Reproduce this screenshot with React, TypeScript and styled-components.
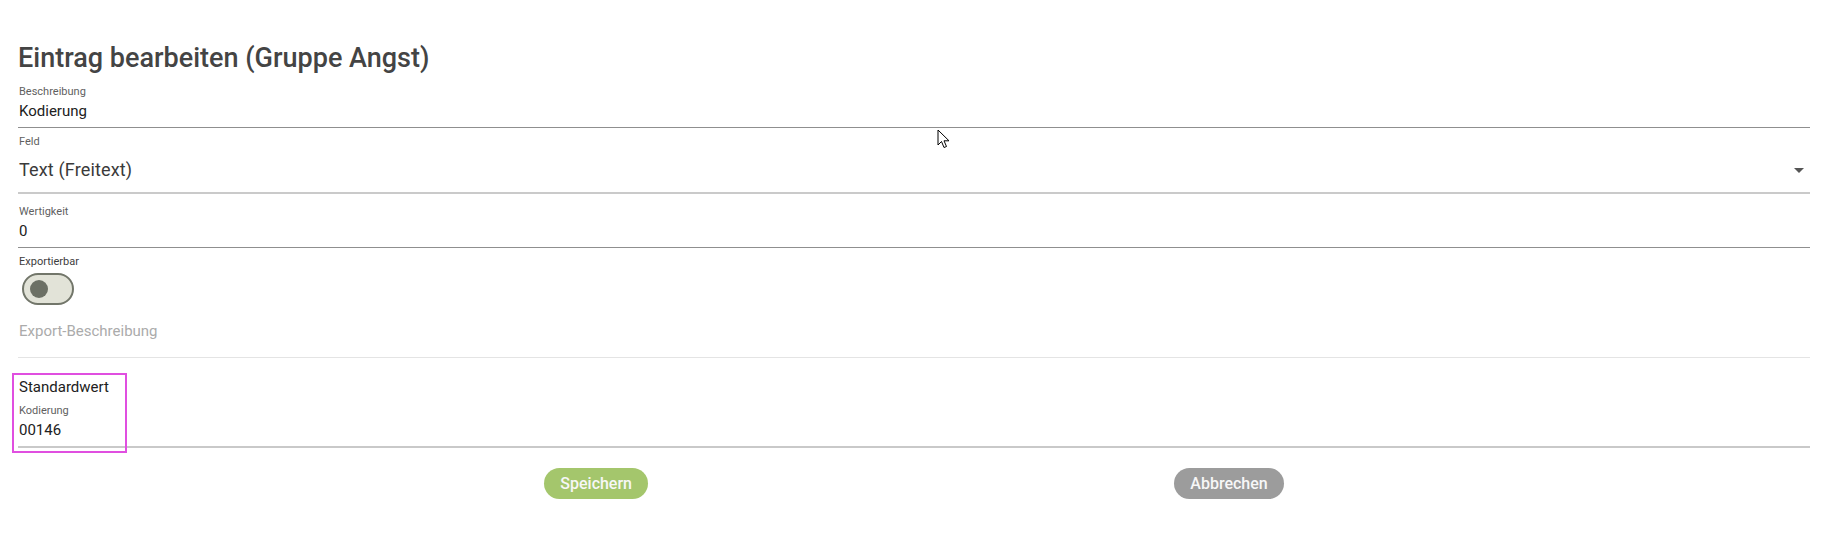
import React from 'react';
import styled, {createGlobalStyle} from 'styled-components';

const GlobalStyle = createGlobalStyle`
  body {
    margin: 0;
    background: #ffffff;
    font-family: Roboto, "Liberation Sans", sans-serif;
    color: #222222;
  }
`

type FieldProps = {
    label: string
    value: string
    thick?: boolean
}

const TextField = (props: FieldProps) => {
    return (
        <Field $thick={props.thick}>
            <Label>{props.label}</Label>
            <Value>{props.value}</Value>
        </Field>
    );
};

export default function App() {
    return (
        <Page>
            <GlobalStyle/>
            <Title>Eintrag bearbeiten (Gruppe Angst)</Title>

            <TextField label={'Beschreibung'} value={'Kodierung'}/>

            <SelectField>
                <Label>Feld</Label>
                <SelectRow>
                    <SelectValue>Text (Freitext)</SelectValue>
                    <Caret/>
                </SelectRow>
            </SelectField>

            <Spaced>
                <TextField label={'Wertigkeit'} value={'0'}/>
            </Spaced>

            <ToggleBlock>
                <ToggleLabel>Exportierbar</ToggleLabel>
                <Switch>
                    <Thumb/>
                </Switch>
            </ToggleBlock>

            <PlaceholderField>Export-Beschreibung</PlaceholderField>

            <DefaultSection>
                <Highlight/>
                <SectionTitle>Standardwert</SectionTitle>
                <TextField label={'Kodierung'} value={'00146'} thick/>
            </DefaultSection>

            <Actions>
                <ActionButton $variant={'primary'}>Speichern</ActionButton>
                <ActionButton $variant={'secondary'}>Abbrechen</ActionButton>
            </Actions>

            <Cursor width="14" height="21" viewBox="0 0 14 21">
                <path d="M1 1 L1 16 L4.5 12.5 L7 18.5 L9.5 17.5 L7 11.8 L12 11.8 Z"
                      fill="#ffffff" stroke="#000000" strokeWidth="1" strokeLinejoin="round"/>
            </Cursor>
        </Page>
    );
}

const Page = styled.div`
  position: relative;
  padding: 40px 17px 36px 18px;
`

const Title = styled.h2`
  margin: 0 0 9px;
  font-size: 27px;
  line-height: 36px;
  font-weight: 500;
  color: #444444;
`

const Field = styled.div<{ $thick?: boolean }>`
  padding-bottom: 6px;
  border-bottom: ${props => props.$thick ? '2px solid #c9c9c9' : '1px solid #8f8f8f'};
`

const Label = styled.div`
  font-size: 11px;
  line-height: 14px;
  color: #5f5f5f;
  padding-left: 1px;
`

const Value = styled.div`
  margin-top: 2px;
  font-size: 15px;
  line-height: 20px;
  color: #212121;
  padding-left: 1px;
`

const SelectField = styled.div`
  margin-top: 7px;
  padding-bottom: 10px;
  border-bottom: 2px solid #cacaca;
`

const SelectRow = styled.div`
  display: flex;
  align-items: center;
  justify-content: space-between;
  margin-top: 9px;
  padding-right: 6px;
`

const SelectValue = styled.div`
  font-size: 18px;
  line-height: 24px;
  letter-spacing: 0.15px;
  color: #3a3a3a;
  padding-left: 1px;
`

const Caret = styled.span`
  width: 0;
  height: 0;
  border-left: 5px solid transparent;
  border-right: 5px solid transparent;
  border-top: 5px solid #555555;
`

const Spaced = styled.div`
  margin-top: 11px;
`

const ToggleBlock = styled.div`
  margin-top: 7px;
`

const ToggleLabel = styled(Label)`
  color: #3d3d3d;
`

const Switch = styled.div`
  box-sizing: border-box;
  position: relative;
  margin: 4px 0 0 4px;
  width: 52px;
  height: 32px;
  border-radius: 16px;
  border: 2px solid #72766a;
  background: #e2e3d8;
`

const Thumb = styled.span`
  position: absolute;
  left: 6px;
  top: 5px;
  width: 18px;
  height: 18px;
  border-radius: 50%;
  background: #6c7065;
`

const PlaceholderField = styled.div`
  margin-top: 14px;
  padding: 0 0 14px 1px;
  font-size: 15px;
  line-height: 24px;
  color: #ababab;
  border-bottom: 1px solid #e4e4e4;
`

const DefaultSection = styled.div`
  position: relative;
  margin-top: 19px;
`

const Highlight = styled.div`
  box-sizing: border-box;
  position: absolute;
  left: -6px;
  top: -4px;
  width: 115px;
  height: 80px;
  border: 2px solid #e04fe0;
  pointer-events: none;
`

const SectionTitle = styled.div`
  font-size: 15px;
  line-height: 20px;
  color: #212121;
  padding-left: 1px;
  margin-bottom: 7px;
`

const Actions = styled.div`
  display: flex;
  justify-content: space-evenly;
  margin-top: 20px;
`

const ActionButton = styled.button<{ $variant: 'primary' | 'secondary' }>`
  height: 31px;
  padding: 0 16px;
  border: none;
  border-radius: 16px;
  font-family: Roboto, "Liberation Sans", sans-serif;
  font-size: 16px;
  font-weight: 500;
  color: #f7f7f7;
  background: ${props => props.$variant === 'primary' ? '#a4c66c' : '#9c9c9c'};
`

const Cursor = styled.svg`
  position: absolute;
  left: 937px;
  top: 129px;
`
